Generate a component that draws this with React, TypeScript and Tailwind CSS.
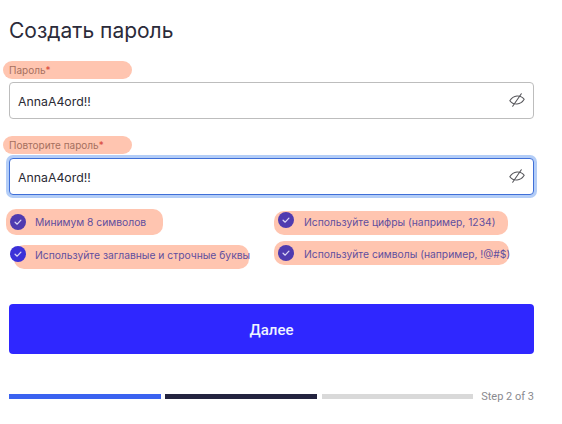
const eyeOff = (
  <svg viewBox="0 0 20 20" className="w-[18px] h-[18px] -translate-y-px text-[#55555a]" fill="none" stroke="currentColor" strokeWidth="1.2" strokeLinecap="round" strokeLinejoin="round">
    <path d="M2 10.800c1.800-3 4.500-5 8-5.300 3.300-.2 6 1 8 3.700-1.800 3-4.500 5-8 5.300-3.300.2-6-1-8-3.700z" />
    <path d="M14.800 3 5.200 17" />
  </svg>
);

function Check({ className }: { className: string }) {
  return (
    <span className={`flex h-[16px] w-[16px] shrink-0 items-center justify-center rounded-full ${className}`}>
      <svg viewBox="0 0 12 12" className="h-[10px] w-[10px]" fill="none" stroke="#d9d4f5" strokeWidth="1.500" strokeLinecap="round" strokeLinejoin="round">
        <path d="M2.500 6.300 5 8.600 9.500 3.800" />
      </svg>
    </span>
  );
}

function Field({ label, focused }: { label: string; focused?: boolean }) {
  return (
    <div>
      <div className="-ml-[6px] flex h-[18px] w-[129px] items-center rounded-full bg-[#ffc5b0] pl-[6px] text-[10px] text-[#a5705f]">
        {label}
        <span className="text-[#d9483a]">*</span>
      </div>
      <div
        className={
          focused
            ? "mt-[4px] flex h-[37px] items-center justify-between rounded-[4px] border border-[#3f6fd8] bg-white pl-[8px] pr-[7px] shadow-[0_0_0_3px_#b3cdf7]"
            : "mt-[3px] flex h-[37px] items-center justify-between rounded-[4px] border border-[#bdbdbd] bg-white pl-[8px] pr-[7px]"
        }
      >
        <span className="pt-[3px] text-[12.3px] text-[#2a2a33]">AnnaA4ord!!</span>
        {eyeOff}
      </div>
    </div>
  );
}

export default function App() {
  return (
    <div className="h-[424px] w-[562px] overflow-hidden bg-white pl-[9px] font-['Inter',sans-serif]">
      <div className="w-[525px]">
        <h1 className="pt-[18px] text-[21px] leading-[26px] font-normal text-[#2b2b3a]">Создать пароль</h1>

        <div className="mt-[17px]">
          <Field label="Пароль" />
        </div>
        <div className="mt-[17px]">
          <Field label="Повторите пароль" focused />
        </div>

        {/* Requirements */}
        <div className="mt-[14px] flex text-[10.3px] text-[#5f4f9f]">
          <div className="w-[265px]">
            <div className="-ml-[3px] flex h-[26px] w-[157px] items-center rounded-[10px] bg-[#ffc5b0] pl-[4px]">
              <Check className="bg-[#4f3bb0]" />
              <span className="ml-[9px] pt-[2px]">Минимум 8 символов</span>
            </div>
            <div className="mt-[10px] ml-[5px] flex h-[24px] w-[235px] items-start rounded-[10px] bg-[#ffc5b0]">
              <Check className="-ml-[4px] mt-[1px] bg-[#3b30d8]" />
              <span className="mt-[3px] ml-[9px] whitespace-nowrap">Используйте заглавные и строчные буквы</span>
            </div>
          </div>
          <div className="pt-[2px]">
            <div className="flex h-[24px] w-[234px] items-start rounded-[10px] bg-[#ffc5b0] pl-[4px]">
              <Check className="mt-[1px] bg-[#4f3bb0]" />
              <span className="mt-[4px] ml-[10px]">Используйте цифры (например, 1234)</span>
            </div>
            <div className="mt-[6px] flex h-[24px] w-[235px] items-center rounded-[10px] bg-[#ffc5b0] pl-[4px]">
              <Check className="bg-[#4f3bb0]" />
              <span className="ml-[10px] whitespace-nowrap pt-[3px]">Используйте символы (например, !@#$)</span>
            </div>
          </div>
        </div>

        <button className="mt-[35px] flex h-[50px] w-full items-center justify-center rounded-[4px] bg-[#2f27ff] pt-[3px] font-['Roboto',sans-serif] text-[15px] font-medium text-[#eef4ff]">
          Далее
        </button>

        {/* Progress */}
        <div className="mt-[40px] flex h-[5px] items-center font-['Roboto',sans-serif]">
          <div className="h-[5px] w-[152px] bg-[#3b63f0]" />
          <div className="ml-[4px] h-[5px] w-[152px] bg-[#23233f]" />
          <div className="ml-[5px] h-[5px] w-[151px] bg-[#d9d9d9]" />
          <span className="ml-auto pt-[1px] text-[11px] text-[#8a8a8f]">Step 2 of 3</span>
        </div>
      </div>
    </div>
  );
}
